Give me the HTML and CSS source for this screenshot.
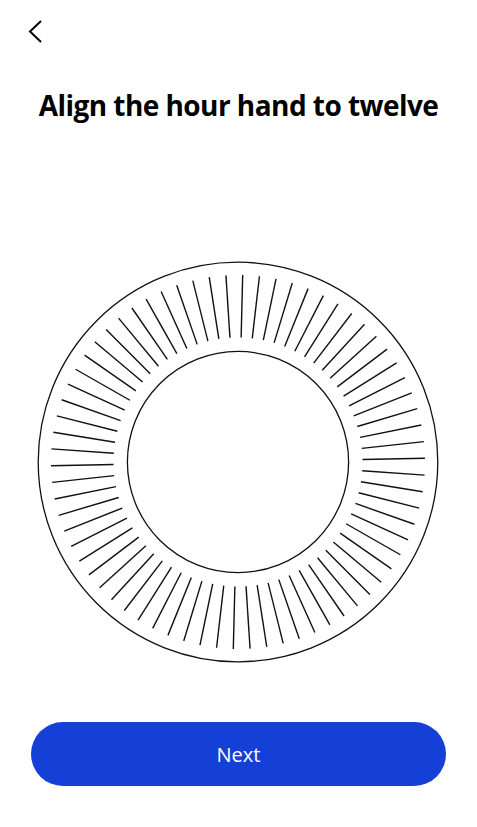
FILE: index.html
```html
<!DOCTYPE html>
<html lang="en">
<head>
<meta charset="utf-8">
<title>Align the hour hand</title>
<link rel="stylesheet" href="styles.css">
</head>
<body>
<div class="page">
  <div class="topbar">
    <button class="back" aria-label="Back">
      <svg width="16" height="26" viewBox="0 0 16 26"><polyline points="14,3 3,13.5 14,24" fill="none" stroke="#000" stroke-width="2"/></svg>
    </button>
  </div>
  <h1 class="title">Align the hour hand to twelve</h1>
  <div class="dial">
    <svg width="402" height="402" viewBox="-201 -201 402 402">
      <defs>
        <line id="t" x1="0" y1="-124.5" x2="0" y2="-187" stroke="#111" stroke-width="1.4"/>
      </defs>
      <circle cx="0" cy="0" r="199.8" fill="none" stroke="#111" stroke-width="1.3"/>
      <circle cx="0" cy="0" r="110.6" fill="none" stroke="#111" stroke-width="1.3"/>
      <g>
        <use href="#t" transform="rotate(1.44)"/><use href="#t" transform="rotate(6.58)"/><use href="#t" transform="rotate(11.73)"/><use href="#t" transform="rotate(16.87)"/><use href="#t" transform="rotate(22.01)"/>
        <use href="#t" transform="rotate(27.15)"/><use href="#t" transform="rotate(32.30)"/><use href="#t" transform="rotate(37.44)"/><use href="#t" transform="rotate(42.58)"/><use href="#t" transform="rotate(47.73)"/>
        <use href="#t" transform="rotate(52.87)"/><use href="#t" transform="rotate(58.01)"/><use href="#t" transform="rotate(63.15)"/><use href="#t" transform="rotate(68.30)"/><use href="#t" transform="rotate(73.44)"/>
        <use href="#t" transform="rotate(78.58)"/><use href="#t" transform="rotate(83.73)"/><use href="#t" transform="rotate(88.87)"/><use href="#t" transform="rotate(94.01)"/><use href="#t" transform="rotate(99.15)"/>
        <use href="#t" transform="rotate(104.30)"/><use href="#t" transform="rotate(109.44)"/><use href="#t" transform="rotate(114.58)"/><use href="#t" transform="rotate(119.73)"/><use href="#t" transform="rotate(124.87)"/>
        <use href="#t" transform="rotate(130.01)"/><use href="#t" transform="rotate(135.15)"/><use href="#t" transform="rotate(140.30)"/><use href="#t" transform="rotate(145.44)"/><use href="#t" transform="rotate(150.58)"/>
        <use href="#t" transform="rotate(155.73)"/><use href="#t" transform="rotate(160.87)"/><use href="#t" transform="rotate(166.01)"/><use href="#t" transform="rotate(171.15)"/><use href="#t" transform="rotate(176.30)"/>
        <use href="#t" transform="rotate(181.44)"/><use href="#t" transform="rotate(186.58)"/><use href="#t" transform="rotate(191.73)"/><use href="#t" transform="rotate(196.87)"/><use href="#t" transform="rotate(202.01)"/>
        <use href="#t" transform="rotate(207.15)"/><use href="#t" transform="rotate(212.30)"/><use href="#t" transform="rotate(217.44)"/><use href="#t" transform="rotate(222.58)"/><use href="#t" transform="rotate(227.73)"/>
        <use href="#t" transform="rotate(232.87)"/><use href="#t" transform="rotate(238.01)"/><use href="#t" transform="rotate(243.15)"/><use href="#t" transform="rotate(248.30)"/><use href="#t" transform="rotate(253.44)"/>
        <use href="#t" transform="rotate(258.58)"/><use href="#t" transform="rotate(263.73)"/><use href="#t" transform="rotate(268.87)"/><use href="#t" transform="rotate(274.01)"/><use href="#t" transform="rotate(279.15)"/>
        <use href="#t" transform="rotate(284.30)"/><use href="#t" transform="rotate(289.44)"/><use href="#t" transform="rotate(294.58)"/><use href="#t" transform="rotate(299.73)"/><use href="#t" transform="rotate(304.87)"/>
        <use href="#t" transform="rotate(310.01)"/><use href="#t" transform="rotate(315.15)"/><use href="#t" transform="rotate(320.30)"/><use href="#t" transform="rotate(325.44)"/><use href="#t" transform="rotate(330.58)"/>
        <use href="#t" transform="rotate(335.73)"/><use href="#t" transform="rotate(340.87)"/><use href="#t" transform="rotate(346.01)"/><use href="#t" transform="rotate(351.15)"/><use href="#t" transform="rotate(356.30)"/>
      </g>
    </svg>
  </div>
  <button class="next">Next</button>
</div>
</body>
</html>
```

FILE: styles.css
```css
html, body {
  margin: 0;
  padding: 0;
  background: #fff;
}

.page {
  height: 827px;
  display: flex;
  flex-direction: column;
  font-family: "Open Sans", "Noto Sans", sans-serif;
  color: #000;
}

.topbar {
  height: 85px;
  padding-left: 27px;
  padding-top: 18px;
  box-sizing: border-box;
}

.back {
  display: block;
  padding: 0;
  margin: 0;
  border: 0;
  background: none;
  width: 16px;
  height: 26px;
}

.back svg {
  display: block;
}

.title {
  margin: 0;
  height: 40px;
  line-height: 40px;
  font-size: 28px;
  font-weight: 700;
  text-align: center;
  letter-spacing: -0.55px;
}

.dial {
  margin-top: 135.5px;
  display: flex;
  justify-content: center;
}

.dial svg {
  display: block;
  margin-left: -0.4px;
}

.next {
  margin: auto 31px 41px;
  height: 64px;
  border: 0;
  border-radius: 32px;
  background: #1540d8;
  color: #fff;
  font-family: "Open Sans", "Noto Sans", sans-serif;
  font-size: 20px;
  font-weight: 400;
  padding: 0;
}
```
